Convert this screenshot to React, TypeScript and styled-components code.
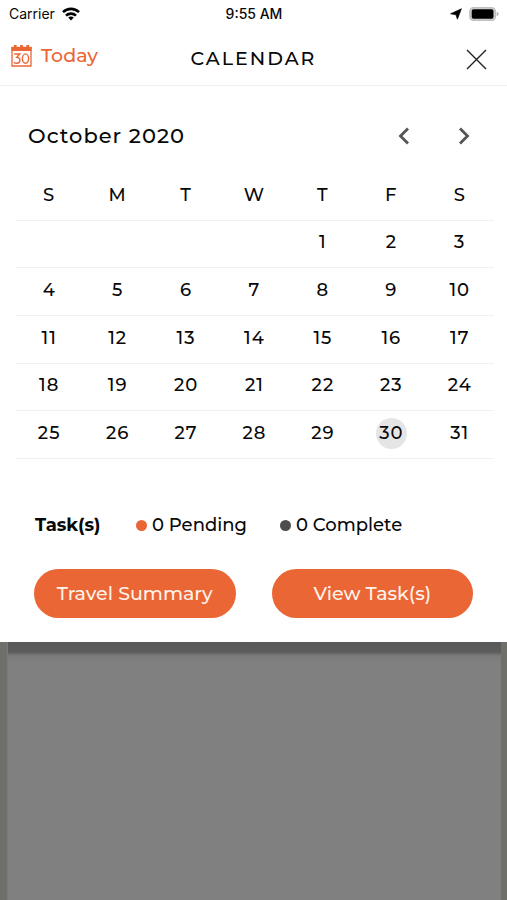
import React, { useState } from "react";
import styled, { createGlobalStyle } from "styled-components";

const ORANGE = "#eb6635";

const GlobalStyle = createGlobalStyle`
  *, *::before, *::after { box-sizing: border-box; }
  body {
    margin: 0;
    background: #808080;
    color: #080808;
    font-family: Montserrat, Inter, "Liberation Sans", sans-serif;
  }
  button { font: inherit; color: inherit; background: none; border: 0; padding: 0; cursor: pointer; }
`;

const Screen = styled.div`
  min-height: 100vh;
  display: flex;
  flex-direction: column;
  background: #70706b;
`;

const Sheet = styled.main`
  background: #fff;
`;

const Backdrop = styled.div`
  flex: 1;
  margin: 0 6px 0 7px;
  background: linear-gradient(#585858 0, #5c5c5c 10px, #7c7c7c 14px, #808080 22px);
  border-left: 1px solid #7c7c76;
`;

const StatusBar = styled.div`
  display: grid;
  grid-template-columns: 1fr auto 1fr;
  align-items: center;
  height: 28px;
  padding: 0 8px 0 9px;
  font-family: Inter, "Liberation Sans", sans-serif;
  font-size: 14px;
  line-height: 20px;
`;

const StatusGroup = styled.div<{ $end?: boolean }>`
  display: flex;
  align-items: center;
  gap: 7px;
  justify-content: ${(p) => (p.$end ? "flex-end" : "flex-start")};
`;

const Clock = styled.span`
  font-weight: 500;
`;

const Header = styled.header`
  display: grid;
  grid-template-columns: 1fr auto 1fr;
  align-items: center;
  height: 58px;
  padding: 5px 11px 0;
  border-bottom: 1px solid #f0f0f0;
`;

const TodayButton = styled.button`
  display: flex;
  align-items: center;
  justify-self: start;
  gap: 9px;
  padding-bottom: 6px;
  color: ${ORANGE};
  font-size: 19px;
  font-weight: 500;
  line-height: 24px;
`;

const Title = styled.h1`
  margin: 0;
  font-size: 19px;
  font-weight: 500;
  line-height: 24px;
  letter-spacing: 2px;
`;

const CloseButton = styled.button`
  display: flex;
  justify-self: end;
  margin-right: 9px;
`;

const MonthBar = styled.div`
  display: flex;
  align-items: center;
  justify-content: space-between;
  padding: 36px 31px 22px 28px;
`;

const MonthName = styled.h2`
  margin: 0;
  font-size: 21px;
  font-weight: 500;
  line-height: 28px;
  letter-spacing: 1px;
`;

const MonthNav = styled.div`
  display: flex;
  gap: 36px;
`;

const NavButton = styled.button`
  display: flex;
  color: #555;
`;

const CalendarWrap = styled.section`
  padding: 0 13px 0 15px;
`;

const MonthTable = styled.table`
  width: 100%;
  height: 287px;
  table-layout: fixed;
  border-collapse: collapse;
  font-size: 18px;
  letter-spacing: 1px;

  th, td {
    padding: 0 0 2px;
    text-align: center;
    vertical-align: middle;
    font-weight: 500;
    border-bottom: 1px solid #f1f1f1;
  }

  th {
    height: 48px;
  }
`;

const Day = styled.button<{ $selected: boolean }>`
  display: block;
  width: 31px;
  height: 31px;
  margin: 0 auto;
  border-radius: 50%;
  text-align: center;
  letter-spacing: inherit;
  line-height: 31px;
  white-space: nowrap;
  background: ${(p) => (p.$selected ? "#e5e5e5" : "transparent")};
`;

const TaskRow = styled.section`
  display: flex;
  align-items: center;
  padding: 54px 34px 0 35px;
  font-size: 18px;
  font-weight: 500;
  line-height: 24px;
`;

const TaskLabel = styled.strong`
  flex: 0 0 101px;
  font-weight: 700;
`;

const TaskCount = styled.span`
  display: flex;
  align-items: center;
  gap: 5px;
  flex: 0 0 144px;
  white-space: nowrap;
`;

const Dot = styled.i<{ $color: string }>`
  width: 11px;
  height: 11px;
  border-radius: 50%;
  background: ${(p) => p.$color};
`;

const Actions = styled.div`
  display: grid;
  grid-template-columns: 1fr 1fr;
  gap: 36px;
  padding: 32px 34px 24px;
`;

const ActionButton = styled.button`
  height: 49px;
  border-radius: 25px;
  background: ${ORANGE};
  color: #fff3ea;
  font-size: 19px;
  font-weight: 500;
  line-height: 24px;
`;

const WifiIcon = () => (
  <svg width="18" height="14" viewBox="0 0 18 14" aria-hidden="true">
    <g fill="none" stroke="#000" strokeWidth="2.6">
      <path d="M1 5.1C5.5 .8 12.5 .8 17 5.1" />
      <path d="M4 8.6C6.8 5.9 11.2 5.9 14 8.6" />
    </g>
    <path d="M6.2 10.6C7.8 9.2 10.2 9.2 11.8 10.6L9 13.5Z" />
  </svg>
);

const LocationIcon = () => (
  <svg width="12" height="12" viewBox="0 0 12 12" aria-hidden="true">
    <path d="M11.4 .8L7.4 11.2L6 6.8L.6 5.8Z" stroke="#000" strokeWidth=".7" strokeLinejoin="round" />
  </svg>
);

const BatteryIcon = () => (
  <svg width="30" height="14" viewBox="0 0 30 14" aria-hidden="true">
    <rect x=".8" y=".8" width="25.6" height="12.4" rx="3.6" fill="#d4d4d4" stroke="#c0c0c0" strokeWidth="1.4" />
    <rect x="2.7" y="2.2" width="21.8" height="9.6" rx="1.8" />
    <path d="M27.7 4.8Q29.8 5.6 29.8 7T27.7 9.2Z" fill="#b5b5b5" />
  </svg>
);

const TodayIcon = () => (
  <svg width="21" height="22" viewBox="0 0 21 22" aria-hidden="true">
    <path d="M1 2.5H20V21H1Z" fill="none" stroke={ORANGE} strokeWidth="1.3" />
    <path d="M.4 2H3V0H5.6V2H9.2V0H11.8V2H15.4V0H18V2H20.6V6H.4Z" fill={ORANGE} />
    <g fill="none" stroke={ORANGE} strokeWidth="1.4">
      <path d="M3.2 9H8.8L5.8 12.4C10.2 12.4 9.8 18.3 5.8 18.3Q4.1 18.3 2.9 17.2" />
      <ellipse cx="14.5" cy="13.6" rx="3.1" ry="4.7" />
    </g>
  </svg>
);

const CloseIcon = () => (
  <svg width="21" height="21" viewBox="0 0 21 21" aria-hidden="true">
    <path d="M1 1L20 20M20 1L1 20" stroke="#222" strokeWidth="1.4" />
  </svg>
);

const Chevron = ({ next = false }: { next?: boolean }) => (
  <svg width="24" height="24" viewBox="0 0 24 24" fill="none" aria-hidden="true">
    <path d={next ? "M8 4.5L15.5 12L8 19.5" : "M16 4.5L8.5 12L16 19.5"} stroke="currentColor" strokeWidth="2.8" />
  </svg>
);

const WEEKDAYS = [
  ["S", "Sunday"],
  ["M", "Monday"],
  ["T", "Tuesday"],
  ["W", "Wednesday"],
  ["T", "Thursday"],
  ["F", "Friday"],
  ["S", "Saturday"],
];
const FIRST_WEEKDAY = 4;
const DAY_COUNT = 31;
const WEEKS = Array.from({ length: 5 }, (_, w) =>
  Array.from({ length: 7 }, (_, d) => {
    const day = w * 7 + d - FIRST_WEEKDAY + 1;
    return day > 0 && day <= DAY_COUNT ? day : null;
  })
);

export default function App() {
  const [selected, setSelected] = useState(30);

  return (
    <Screen>
      <GlobalStyle />
      <Sheet>
        <StatusBar>
          <StatusGroup>
            Carrier
            <WifiIcon />
          </StatusGroup>
          <Clock>9:55 AM</Clock>
          <StatusGroup $end>
            <LocationIcon />
            <BatteryIcon />
          </StatusGroup>
        </StatusBar>

        <Header>
          <TodayButton type="button" onClick={() => setSelected(30)}>
            <TodayIcon />
            Today
          </TodayButton>
          <Title>CALENDAR</Title>
          <CloseButton type="button" aria-label="Close">
            <CloseIcon />
          </CloseButton>
        </Header>

        <MonthBar>
          <MonthName>October 2020</MonthName>
          <MonthNav>
            <NavButton type="button" aria-label="Previous month">
              <Chevron />
            </NavButton>
            <NavButton type="button" aria-label="Next month">
              <Chevron next />
            </NavButton>
          </MonthNav>
        </MonthBar>

        <CalendarWrap>
          <MonthTable>
            <thead>
              <tr>
                {WEEKDAYS.map(([short, name]) => (
                  <th key={name} scope="col" abbr={name}>
                    {short}
                  </th>
                ))}
              </tr>
            </thead>
            <tbody>
              {WEEKS.map((week, w) => (
                <tr key={w}>
                  {week.map((day, d) => (
                    <td key={d}>
                      {day && (
                        <Day
                          type="button"
                          $selected={day === selected}
                          aria-pressed={day === selected}
                          onClick={() => setSelected(day)}
                        >
                          {day}
                        </Day>
                      )}
                    </td>
                  ))}
                </tr>
              ))}
            </tbody>
          </MonthTable>
        </CalendarWrap>

        <TaskRow>
          <TaskLabel>Task(s)</TaskLabel>
          <TaskCount>
            <Dot $color={ORANGE} />
            0 Pending
          </TaskCount>
          <TaskCount>
            <Dot $color="#4d4d4d" />
            0 Complete
          </TaskCount>
        </TaskRow>

        <Actions>
          <ActionButton type="button">Travel Summary</ActionButton>
          <ActionButton type="button">View Task(s)</ActionButton>
        </Actions>
      </Sheet>
      <Backdrop />
    </Screen>
  );
}
